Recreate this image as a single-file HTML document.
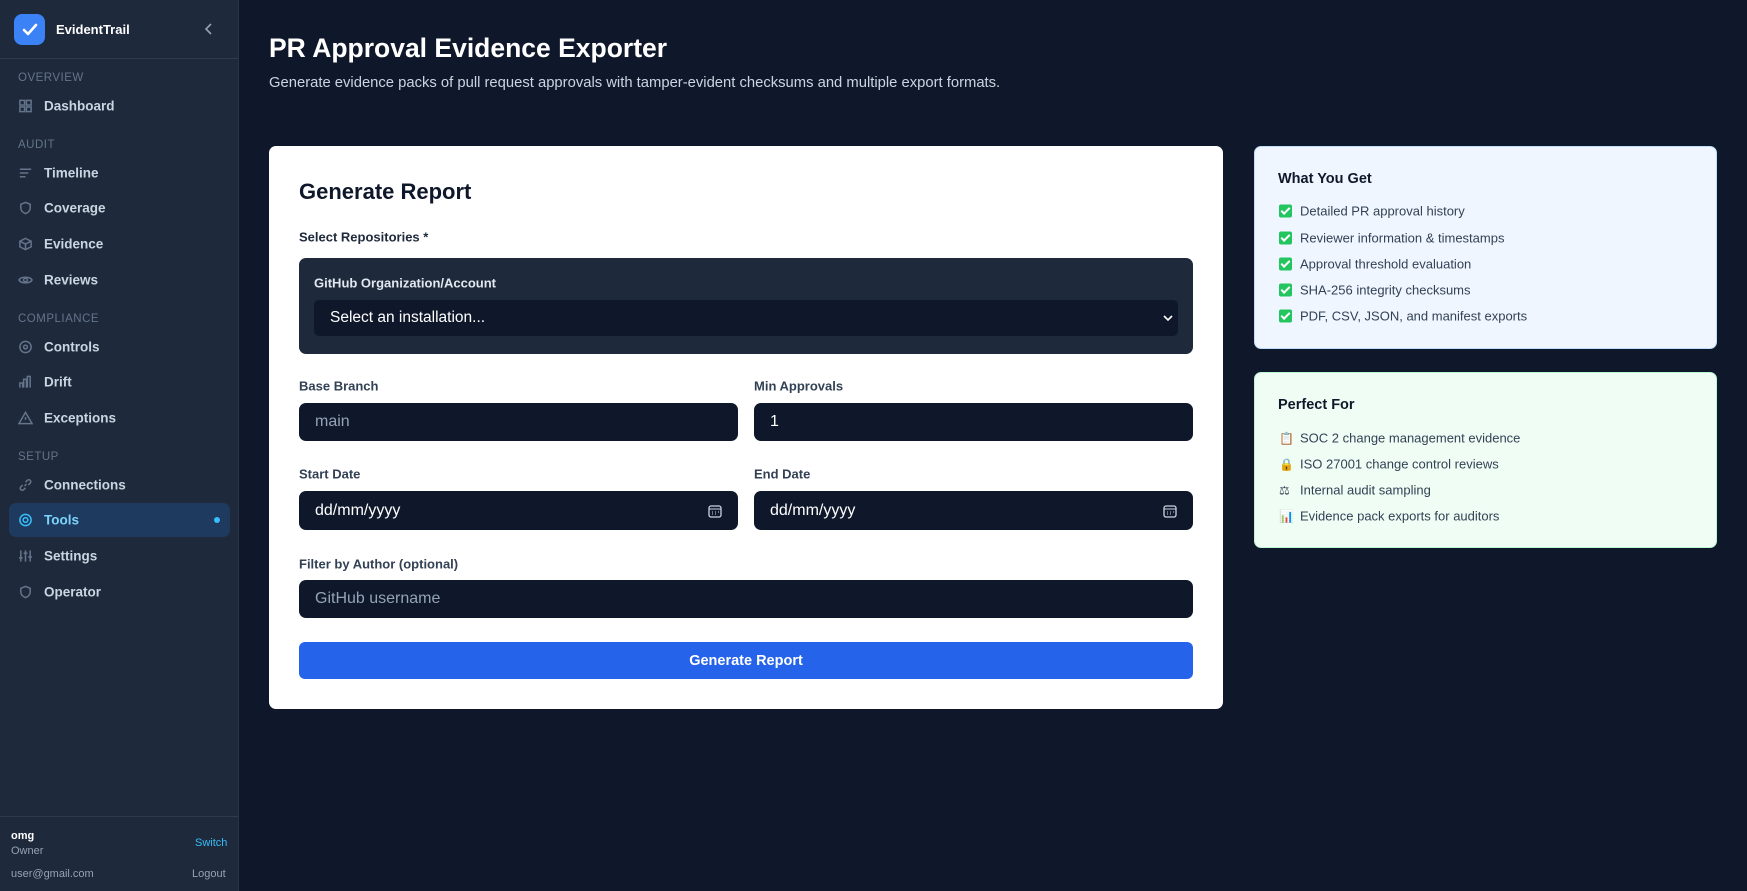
<!DOCTYPE html>
<html><head><meta charset="utf-8"><style>
*{box-sizing:border-box;margin:0;padding:0}
body{width:1747px;height:891px;background:#0f172a;font-family:"Liberation Sans","DejaVu Sans",sans-serif;position:relative;overflow:hidden;color:#e2e8f0}
.a{position:absolute;white-space:nowrap}
#sb{position:absolute;left:0;top:0;width:239px;height:891px;background:#1e293b;border-right:1px solid #273449}
.sec{position:absolute;left:18px;font-size:11.5px;color:#64748b;letter-spacing:.5px;transform:translateY(-50%)}
.nav{position:absolute;left:18px;font-size:13.5px;font-weight:bold;color:#cbd5e1;transform:translateY(-50%);display:flex;align-items:center}
.nav svg{width:15px;height:15px;margin-right:11px;stroke:#64748b;fill:none;stroke-width:1.6}
.lbl{position:absolute;font-size:13px;font-weight:bold;color:#334155;transform:translateY(-50%)}
.inp{position:absolute;background:#0f172a;border-radius:7px;color:#fff;font-size:16px;display:flex;align-items:center;padding-left:16px}
.li{position:absolute;left:1279px;font-size:13px;color:#334155;transform:translateY(-50%);display:flex;align-items:center}
.ck{display:inline-block;width:13px;height:13px;background:#22c55e;border-radius:2px;margin-right:8px;position:relative}
.ck:after{content:"";position:absolute;left:4px;top:1px;width:3px;height:7px;border:solid #fff;border-width:0 2px 2px 0;transform:rotate(45deg)}
.em{display:inline-block;width:13px;margin-right:8px;font-size:12px}
</style></head><body>
<div id="sb">
<div class="a" style="left:14px;top:14px;width:31px;height:31px;background:#3b82f6;border-radius:8px"><svg width="31" height="31" viewBox="0 0 31 31"><path d="M10 16l4 4 8-9" stroke="#fff" stroke-width="2.6" fill="none" stroke-linecap="round" stroke-linejoin="round"/></svg></div>
<div class="a" style="left:56px;top:22px;font-size:13px;font-weight:bold;color:#fff">EvidentTrail</div>
<svg class="a" style="left:203px;top:22px" width="12" height="14" viewBox="0 0 12 14"><path d="M8 2L3 7l5 5" stroke="#94a3b8" stroke-width="1.6" fill="none"/></svg>
<div class="a" style="left:0;top:58px;width:239px;height:1px;background:#2d3b50"></div>
<div class="sec" style="top:78px">OVERVIEW</div>
<div class="nav" style="top:106px"><svg viewBox="0 0 16 16"><rect x="2" y="2" width="5" height="5"/><rect x="9" y="2" width="5" height="5"/><rect x="2" y="9" width="5" height="5"/><rect x="9" y="9" width="5" height="5"/></svg>Dashboard</div>
<div class="sec" style="top:145px">AUDIT</div>
<div class="nav" style="top:173px"><svg viewBox="0 0 16 16"><path d="M2 4h12M2 8h9M2 12h6"/></svg>Timeline</div>
<div class="nav" style="top:208px"><svg viewBox="0 0 16 16"><path d="M8 2l5 2v4c0 3-2.5 5-5 6-2.5-1-5-3-5-6V4z"/></svg>Coverage</div>
<div class="nav" style="top:244px"><svg viewBox="0 0 16 16"><path d="M8 2l6 3v6l-6 3-6-3V5zM2 5l6 3 6-3M8 8v6"/></svg>Evidence</div>
<div class="nav" style="top:280px"><svg viewBox="0 0 16 16"><path d="M1 8c2-4 12-4 14 0-2 4-12 4-14 0z"/><circle cx="8" cy="8" r="2"/></svg>Reviews</div>
<div class="sec" style="top:319px">COMPLIANCE</div>
<div class="nav" style="top:347px"><svg viewBox="0 0 16 16"><circle cx="8" cy="8" r="6"/><circle cx="8" cy="8" r="2"/></svg>Controls</div>
<div class="nav" style="top:382px"><svg viewBox="0 0 16 16"><path d="M2 14V9h3v5M6 14V5h3v9M10 14V2h3v12"/></svg>Drift</div>
<div class="nav" style="top:418px"><svg viewBox="0 0 16 16"><path d="M8 2l7 12H1zM8 7v3"/></svg>Exceptions</div>
<div class="sec" style="top:457px">SETUP</div>
<div class="nav" style="top:485px"><svg viewBox="0 0 16 16"><path d="M7 9l2-2M5 8l-2 2a2 2 0 003 3l2-2M11 8l2-2a2 2 0 00-3-3L8 5"/></svg>Connections</div>
<div class="a" style="left:9px;top:503px;width:221px;height:34px;background:#1e3a5f;border-radius:7px"></div>
<div class="a" style="left:214px;top:517px;width:6px;height:6px;border-radius:50%;background:#38bdf8"></div>
<div class="nav" style="top:520px;color:#7dd3fc"><svg viewBox="0 0 16 16" style="stroke:#38bdf8"><circle cx="8" cy="8" r="6"/><circle cx="8" cy="8" r="2.5"/></svg>Tools</div>
<div class="nav" style="top:556px"><svg viewBox="0 0 16 16"><path d="M3 2v12M8 2v12M13 2v12M1 10h4M6 5h4M11 9h4"/></svg>Settings</div>
<div class="nav" style="top:592px"><svg viewBox="0 0 16 16"><path d="M8 2l5 2v4c0 3-2.5 5-5 6-2.5-1-5-3-5-6V4z"/></svg>Operator</div>
<div class="a" style="left:0;top:816px;width:239px;height:1px;background:#2d3b50"></div>
<div class="a" style="left:11px;top:830px;font-size:11px;font-weight:bold;color:#fff">omg</div>
<div class="a" style="left:11px;top:845px;font-size:11px;color:#94a3b8">Owner</div>
<div class="a" style="left:195px;top:837px;font-size:11px;color:#38bdf8">Switch</div>
<div class="a" style="left:11px;top:868px;font-size:11px;color:#94a3b8">user@gmail.com</div>
<div class="a" style="left:192px;top:868px;font-size:11px;color:#94a3b8">Logout</div>
</div>

<div class="a" style="left:269px;top:33px;font-size:26.5px;font-weight:bold;color:#fff">PR Approval Evidence Exporter</div>
<div class="a" style="left:269px;top:75px;font-size:14.8px;color:#cbd5e1">Generate evidence packs of pull request approvals with tamper-evident checksums and multiple export formats.</div>

<div class="a" style="left:269px;top:146px;width:954px;height:563px;background:#fff;border-radius:7px"></div>
<div class="a" style="left:299px;top:179px;font-size:22px;font-weight:bold;color:#0f172a">Generate Report</div>
<div class="lbl" style="left:299px;top:237px;color:#1e293b">Select Repositories *</div>
<div class="a" style="left:299px;top:258px;width:894px;height:96px;background:#1e293b;border-radius:7px"></div>
<div class="lbl" style="left:314px;top:283px;color:#e2e8f0">GitHub Organization/Account</div>
<div class="inp" style="left:314px;top:300px;width:864px;height:36px;border-radius:5px;font-size:15.5px">Select an installation...</div>
<svg class="a" style="left:1163px;top:313px" width="10" height="10" viewBox="0 0 10 10"><path d="M1 3l4 4 4-4" stroke="#fff" stroke-width="1.6" fill="none"/></svg>
<div class="lbl" style="left:299px;top:386px">Base Branch</div>
<div class="lbl" style="left:754px;top:386px">Min Approvals</div>
<div class="inp" style="left:299px;top:403px;width:439px;height:38px;color:#94a3b8">main</div>
<div class="inp" style="left:754px;top:403px;width:439px;height:38px">1</div>
<div class="lbl" style="left:299px;top:474px">Start Date</div>
<div class="lbl" style="left:754px;top:474px">End Date</div>
<div class="inp" style="left:299px;top:491px;width:439px;height:39px">dd/mm/yyyy</div>
<div class="inp" style="left:754px;top:491px;width:439px;height:39px">dd/mm/yyyy</div>
<svg class="a" style="left:708px;top:504px" width="14" height="14" viewBox="0 0 14 14"><rect x="1" y="2" width="12" height="11" rx="2" stroke="#cbd5e1" fill="none" stroke-width="1.3"/><path d="M1 5h12M4 8h1M7 8h1M10 8h1M4 10h1M7 10h1" stroke="#cbd5e1"/></svg>
<svg class="a" style="left:1163px;top:504px" width="14" height="14" viewBox="0 0 14 14"><rect x="1" y="2" width="12" height="11" rx="2" stroke="#cbd5e1" fill="none" stroke-width="1.3"/><path d="M1 5h12M4 8h1M7 8h1M10 8h1M4 10h1M7 10h1" stroke="#cbd5e1"/></svg>
<div class="lbl" style="left:299px;top:564px">Filter by Author (optional)</div>
<div class="inp" style="left:299px;top:580px;width:894px;height:38px;color:#94a3b8">GitHub username</div>
<div class="a" style="left:299px;top:642px;width:894px;height:37px;background:#2563eb;border-radius:6px;color:#fff;font-size:14.5px;font-weight:bold;display:flex;align-items:center;justify-content:center">Generate Report</div>

<div class="a" style="left:1254px;top:146px;width:463px;height:203px;background:#eff6ff;border-radius:7px;border:1px solid #bfdbfe"></div>
<div class="a" style="left:1278px;top:171px;font-size:14.5px;font-weight:bold;color:#0f172a">What You Get</div>
<div class="li" style="top:211px"><span class="ck"></span>Detailed PR approval history</div>
<div class="li" style="top:238px"><span class="ck"></span>Reviewer information &amp; timestamps</div>
<div class="li" style="top:264px"><span class="ck"></span>Approval threshold evaluation</div>
<div class="li" style="top:290px"><span class="ck"></span>SHA-256 integrity checksums</div>
<div class="li" style="top:316px"><span class="ck"></span>PDF, CSV, JSON, and manifest exports</div>

<div class="a" style="left:1254px;top:372px;width:463px;height:176px;background:#f0fdf4;border-radius:7px;border:1px solid #bbf7d0"></div>
<div class="a" style="left:1278px;top:397px;font-size:14.5px;font-weight:bold;color:#0f172a">Perfect For</div>
<div class="li" style="top:438px"><span class="em">📋</span>SOC 2 change management evidence</div>
<div class="li" style="top:464px"><span class="em">🔒</span>ISO 27001 change control reviews</div>
<div class="li" style="top:490px"><span class="em">⚖</span>Internal audit sampling</div>
<div class="li" style="top:516px"><span class="em">📊</span>Evidence pack exports for auditors</div>
</body></html>
